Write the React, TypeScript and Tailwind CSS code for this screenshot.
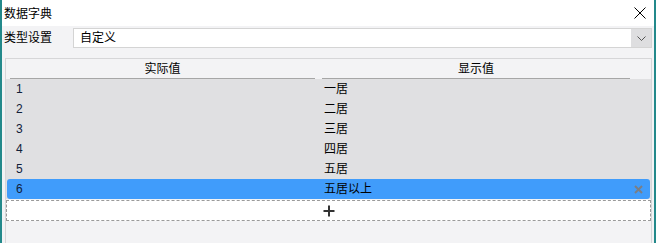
const ROWS = [
  { value: '1', label: '一居' },
  { value: '2', label: '二居' },
  { value: '3', label: '三居' },
  { value: '4', label: '四居' },
  { value: '5', label: '五居' },
  { value: '6', label: '五居以上' },
]

const SELECTED = '6'

export default function App() {
  return (
    <div
      className="w-[656px] h-[243px] overflow-hidden border-x-2 border-[#23898b] bg-[#f3f3f5] flex flex-col text-[12px] text-black"
      style={{ fontFamily: '"Liberation Sans", "Noto Sans CJK SC", sans-serif' }}
    >
      {/* title bar */}
      <div className="h-[26px] bg-white flex items-center justify-between pl-[2px] pr-[8px] shrink-0">
        <span className="text-[12px] leading-none pt-[2px]">数据字典</span>
        <svg width="12" height="12" viewBox="0 0 12 12">
          <path d="M0.5 0.5L11.5 11.5M11.5 0.5L0.5 11.5" stroke="#000" strokeWidth="1" />
        </svg>
      </div>

      {/* type row */}
      <div className="mt-[2px] h-[20px] flex items-center pr-[2px] shrink-0">
        <span className="w-[71px] pl-[2px]">类型设置</span>
        <div className="flex-1 h-full flex border border-[#d4d4d4] bg-white">
          <span className="flex-1 pl-[6px] flex items-center">自定义</span>
          <div className="w-[20px] bg-[#dedee0] flex items-center justify-center">
            <svg width="9" height="5" viewBox="0 0 9 5">
              <path d="M0.5 0.5L4.5 4.5L8.5 0.5" stroke="#555" strokeWidth="1" fill="none" />
            </svg>
          </div>
        </div>
      </div>

      {/* table */}
      <div className="mt-[10px] ml-[3px] mr-[2px] flex-1 border border-b-0 border-[#d6d6d8] flex flex-col">
        <div className="h-[20px] flex shrink-0">
          <div className="w-[312px] pl-[4px] pr-[3px] flex">
            <div className="flex-1 border-b border-[#a6a6a6] flex items-end justify-center">
              实际值
            </div>
          </div>
          <div className="w-[312px] pl-[4px] flex">
            <div className="flex-1 border-b border-[#a6a6a6] flex items-end justify-center">
              显示值
            </div>
          </div>
        </div>

        <div className="bg-[#e0e0e2] flex flex-col">
          {ROWS.map((r) =>
            r.value === SELECTED ? (
              <div
                key={r.value}
                className="h-[20px] mx-[1px] rounded-[3px] bg-[#409cfb] flex items-center"
              >
                <span className="w-[311px] pl-[9px] text-[#10203a]">{r.value}</span>
                <span className="flex-1 pl-[6px]">{r.label}</span>
                <svg width="9" height="9" viewBox="0 0 9 9" className="mr-[7px]">
                  <path d="M1 1L8 8M8 1L1 8" stroke="#7a7f86" strokeWidth="2" />
                </svg>
              </div>
            ) : (
              <div key={r.value} className="h-[20px] flex items-center">
                <span className="w-[312px] pl-[10px] text-[#10203a]">{r.value}</span>
                <span className="flex-1 pl-[6px]">{r.label}</span>
              </div>
            )
          )}
        </div>

        <div className="mt-[1px] h-[21px] border border-dashed border-[#9a9a9a] bg-white flex items-center justify-center">
          <svg width="12" height="12" viewBox="0 0 12 12">
            <path d="M6 0.5V11.5M0.5 6H11.5" stroke="#333" strokeWidth="2" />
          </svg>
        </div>
      </div>
    </div>
  )
}
